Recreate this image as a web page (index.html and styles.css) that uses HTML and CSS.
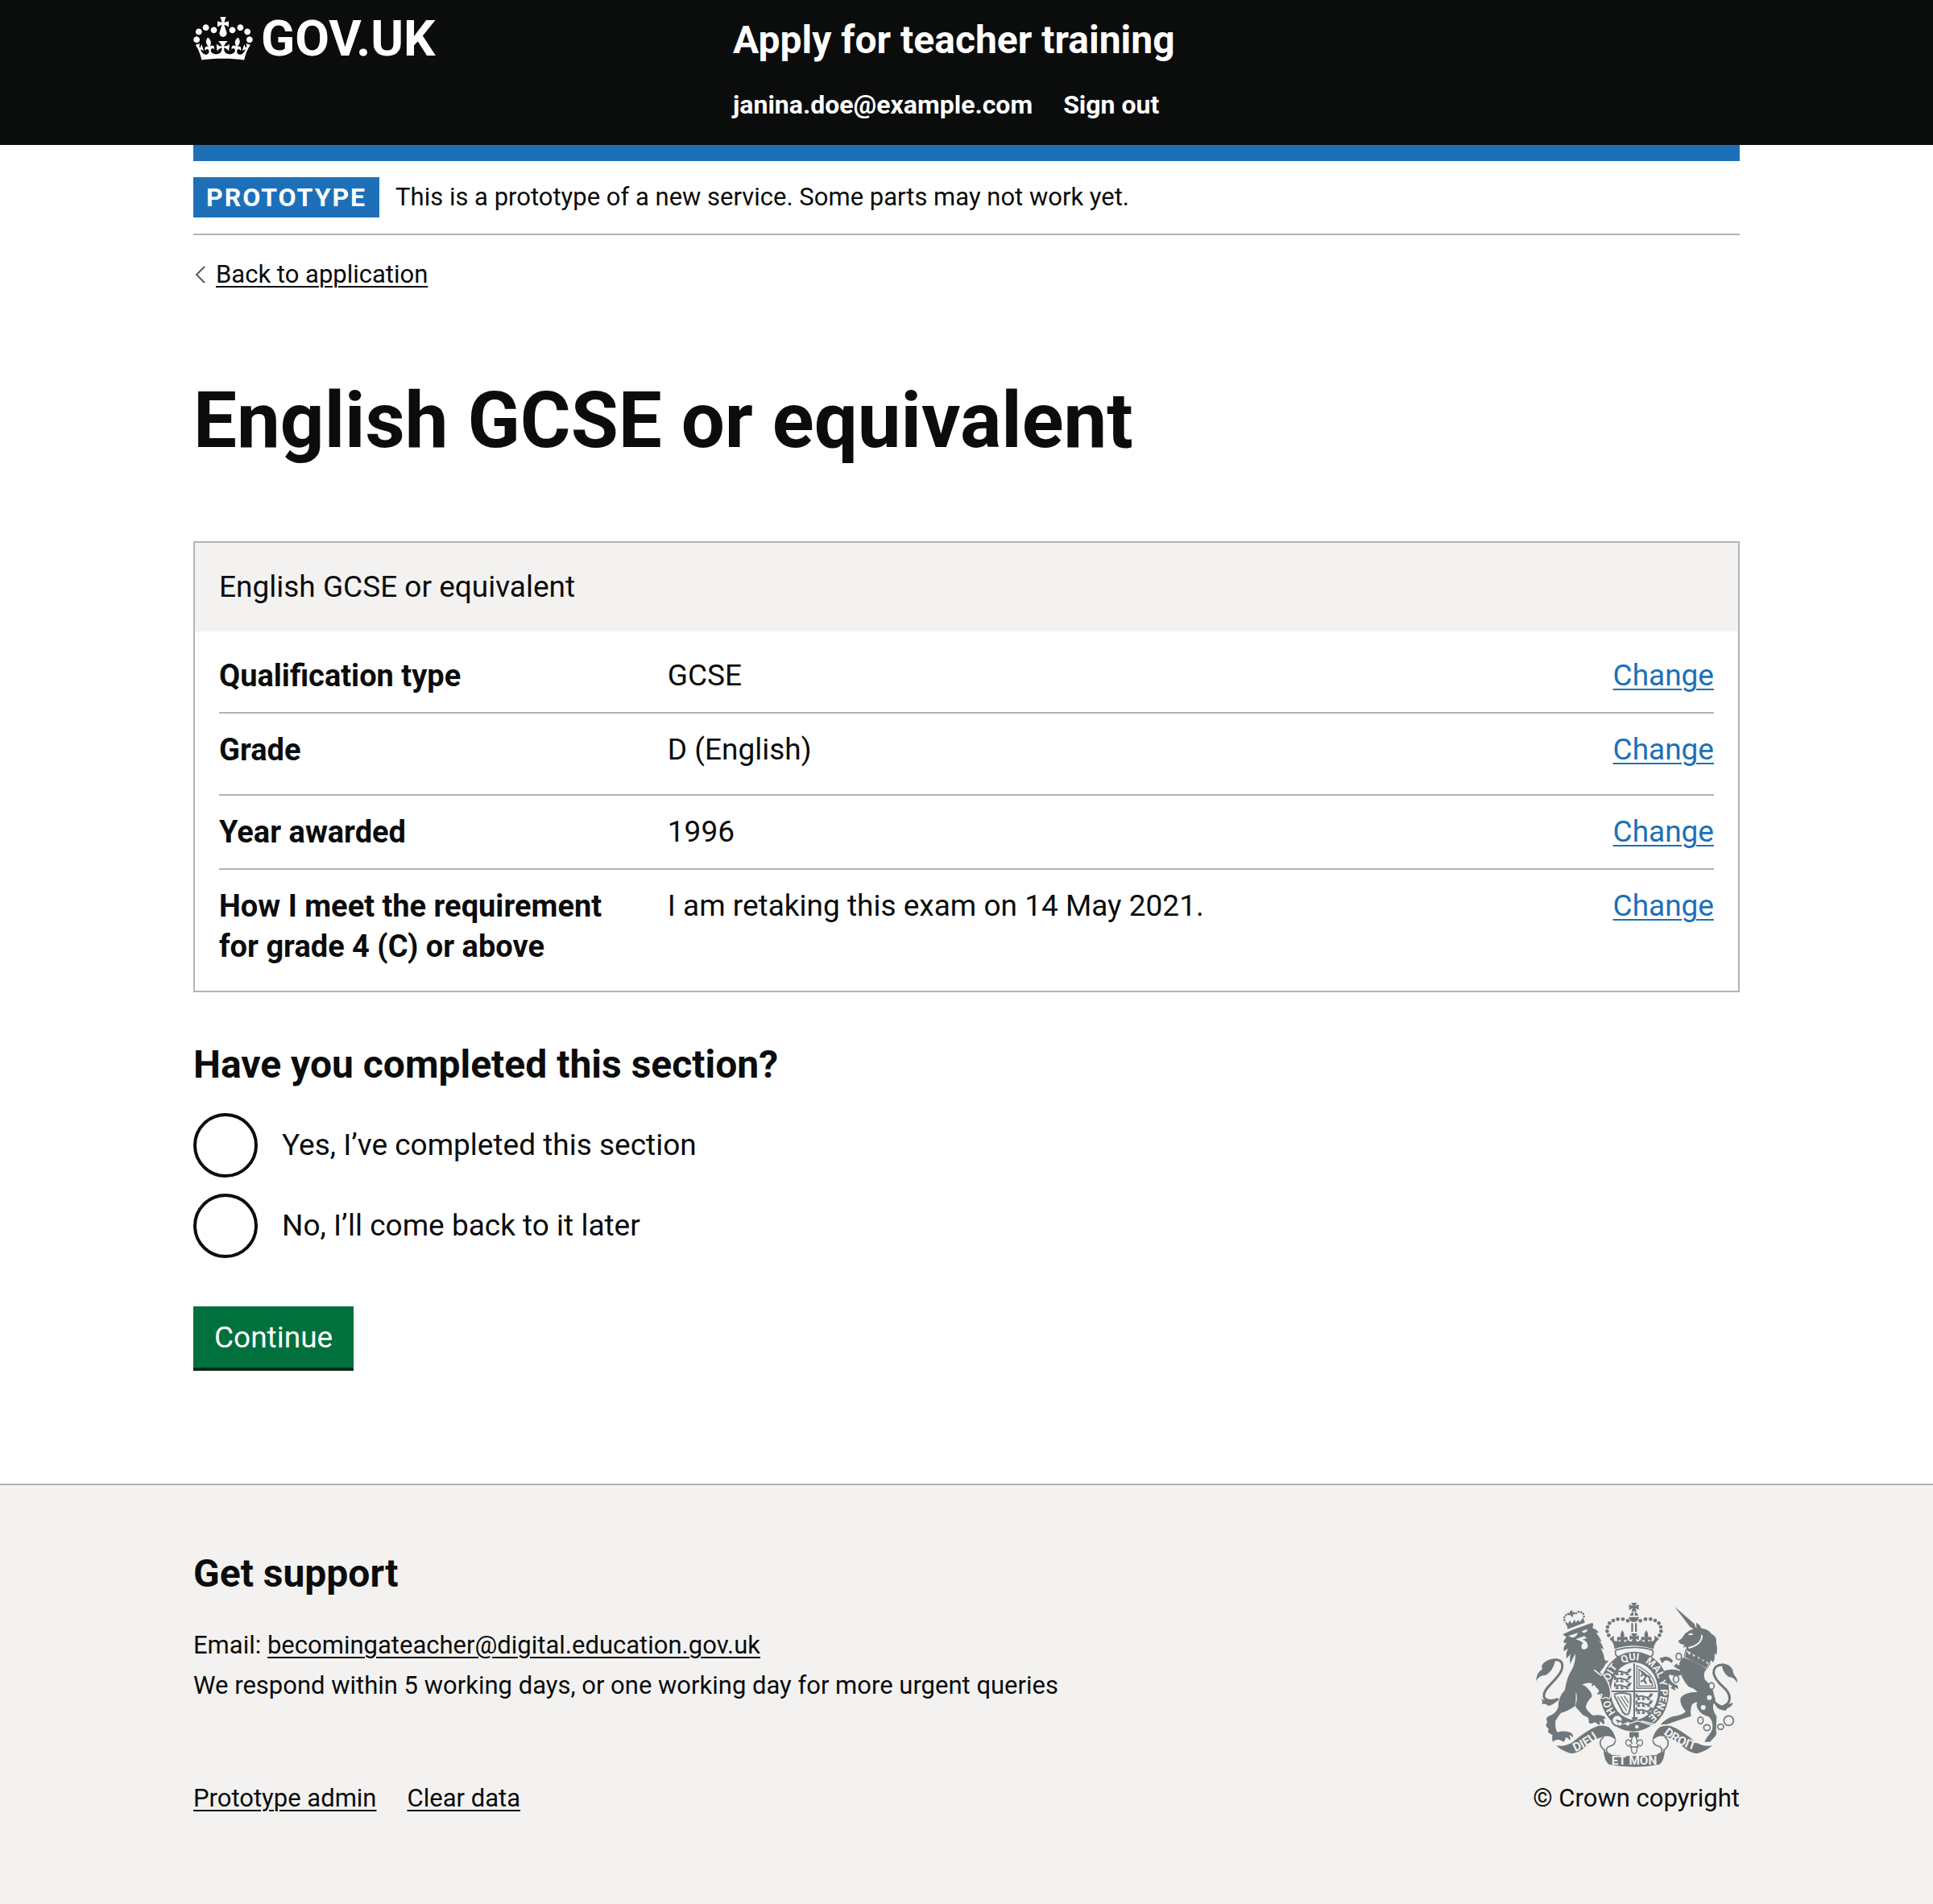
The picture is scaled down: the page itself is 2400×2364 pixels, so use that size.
FILE: index.html
```html
<!DOCTYPE html>
<html lang="en">
<head>
<meta charset="utf-8">
<meta name="viewport" content="width=device-width, initial-scale=1">
<title>English GCSE or equivalent - Apply for teacher training - GOV.UK</title>
<link rel="stylesheet" href="styles.css">
</head>
<body>
<header class="header">
  <div class="container header-inner">
    <div class="header-logo">
      <a class="logo-link" href="#">
        <svg class="crown" viewBox="0 0 132 97" aria-hidden="true"><path fill="currentColor" fill-rule="evenodd" d="M25 30.2c3.5 1.5 7.7-.2 9.1-3.7 1.5-3.6-.2-7.8-3.9-9.2-3.6-1.4-7.6.3-9.1 3.9-1.4 3.5.3 7.5 3.9 9zM9 39.5c3.6 1.5 7.8-.2 9.2-3.7 1.5-3.6-.2-7.8-3.9-9.1-3.6-1.5-7.6.2-9.1 3.8-1.4 3.5.3 7.5 3.8 9zM4.4 57.2c3.5 1.5 7.7-.2 9.1-3.8 1.5-3.6-.2-7.7-3.9-9.1-3.5-1.5-7.6.3-9.1 3.8-1.4 3.5.3 7.6 3.9 9.1zm38.3-21.4c3.5 1.5 7.7-.2 9.1-3.8 1.5-3.6-.2-7.7-3.9-9.1-3.6-1.5-7.6.3-9.1 3.8-1.3 3.6.4 7.7 3.9 9.1zm64.4-5.6c-3.6 1.5-7.8-.2-9.1-3.7-1.5-3.6.2-7.8 3.8-9.2 3.6-1.4 7.7.3 9.2 3.9 1.3 3.5-.4 7.5-3.9 9zm15.9 9.3c-3.6 1.5-7.7-.2-9.1-3.7-1.5-3.6.2-7.8 3.7-9.1 3.6-1.5 7.7.2 9.2 3.8 1.5 3.5-.3 7.5-3.8 9zm4.7 17.7c-3.6 1.5-7.8-.2-9.2-3.8-1.5-3.6.2-7.7 3.9-9.1 3.6-1.5 7.7.3 9.2 3.8 1.3 3.5-.4 7.6-3.9 9.1zM89.3 35.8c-3.6 1.5-7.8-.2-9.2-3.8-1.4-3.6.2-7.7 3.9-9.1 3.6-1.5 7.7.3 9.2 3.8 1.4 3.6-.3 7.7-3.9 9.1zM69.7 17.7l8.9 4.7V9.3l-8.9 2.8c-.2-.3-.5-.6-.9-.9L72.4 0H59.6l3.5 11.2c-.3.3-.6.5-.9.9l-8.8-2.8v13.1l8.8-4.7c.3.3.6.7.9.9l-5 15.4v.1c-.2.8-.4 1.6-.4 2.4 0 4.1 3.1 7.5 7 8.1h.2c.3 0 .7.1 1 .1.4 0 .7 0 1-.1h.2c4-.6 7.1-4.1 7.1-8.1 0-.8-.1-1.7-.4-2.4V34l-5.1-15.4c.4-.2.7-.6 1-.9zM66 92.8c16.9 0 32.8 1.1 47.1 3.2 4-16.9 8.9-26.7 14-33.5l-9.6-3.4c1 4.9 1.1 7.2 0 10.2-1.5-1.4-3-4.3-4.2-8.7L108.6 76c2.8-2 5-3.2 7.5-3.3-4.4 9.4-10 11.9-13.6 11.2-4.3-.8-6.3-4.6-5.6-7.9 1-4.7 5.7-5.9 8-.5 4.3-8.7-3-11.4-7.6-8.8 7.1-7.2 7.9-13.5 2.1-21.1-8 6.1-8.1 12.3-4.5 20.8-4.7-5.4-12.1-2.5-9.5 6.2 3.4-5.2 7.9-2 7.2 3.1-.6 4.3-6.4 7.8-13.5 7.2-10.3-.9-10.9-8-11.2-13.8 2.5-.5 7.1 1.8 11 7.3L80.2 60c-4.1 4.4-8 5.3-12.3 5.4 1.4-4.4 8-11.6 8-11.6H55.5s6.4 7.2 7.9 11.6c-4.2-.1-8-1-12.3-5.4l1.4 16.4c3.9-5.5 8.5-7.7 10.9-7.3-.3 5.8-.9 12.8-11.1 13.8-7.2.6-12.9-2.9-13.5-7.2-.7-5 3.8-8.3 7.1-3.1 2.7-8.7-4.6-11.6-9.4-6.2 3.7-8.5 3.6-14.7-4.6-20.8-5.8 7.6-5 13.9 2.2 21.1-4.7-2.6-11.9.1-7.7 8.8 2.3-5.5 7.1-4.2 8.1.5.7 3.3-1.3 7.1-5.7 7.9-3.5.7-9-1.8-13.5-11.2 2.5.1 4.7 1.3 7.5 3.3l-4.7-15.4c-1.2 4.4-2.7 7.2-4.3 8.7-1.1-3-.9-5.3 0-10.2l-9.5 3.4c5 6.9 9.9 16.7 14 33.5 14.8-2.1 30.8-3.2 47.7-3.2z"/></svg>
        <span>GOV.UK</span>
      </a>
    </div>
    <div class="header-content">
      <a class="service-name" href="#">Apply for teacher training</a>
      <nav class="header-nav" aria-label="Account">
        <a href="#">janina.doe@example.com</a>
        <a href="#">Sign out</a>
      </nav>
    </div>
  </div>
</header>

<div class="container">
  <div class="header-bar"></div>
  <div class="phase-banner">
    <strong class="tag">PROTOTYPE</strong>
    <span>This is a prototype of a new service. Some parts may not work yet.</span>
  </div>
  <a class="back-link" href="#">
    <svg class="chevron" viewBox="0 0 14 22" aria-hidden="true"><path d="M13 1 3 11l10 10" fill="none" stroke="#505a5f" stroke-width="2"/></svg>
    <span>Back to application</span>
  </a>

  <main class="main">
    <h1>English GCSE or equivalent</h1>

    <section class="card">
      <div class="card-header">English GCSE or equivalent</div>
      <dl class="summary">
        <div class="row">
          <dt>Qualification type</dt>
          <dd class="value">GCSE</dd>
          <dd class="action"><a href="#">Change</a></dd>
        </div>
        <div class="row row-tall">
          <dt>Grade</dt>
          <dd class="value">D (English)</dd>
          <dd class="action"><a href="#">Change</a></dd>
        </div>
        <div class="row">
          <dt>Year awarded</dt>
          <dd class="value">1996</dd>
          <dd class="action"><a href="#">Change</a></dd>
        </div>
        <div class="row">
          <dt>How I meet the requirement for grade 4 (C) or above</dt>
          <dd class="value">I am retaking this exam on 14 May 2021.</dd>
          <dd class="action"><a href="#">Change</a></dd>
        </div>
      </dl>
    </section>

    <form class="form" action="#">
      <fieldset class="fieldset">
        <legend>Have you completed this section?</legend>
        <div class="radios">
          <div class="radio">
            <input type="radio" name="completed" id="completed-yes" value="yes">
            <label for="completed-yes">Yes, I’ve completed this section</label>
          </div>
          <div class="radio">
            <input type="radio" name="completed" id="completed-no" value="no">
            <label for="completed-no">No, I’ll come back to it later</label>
          </div>
        </div>
      </fieldset>
      <button class="button" type="submit">Continue</button>
    </form>
  </main>
</div>

<footer class="footer">
  <div class="container footer-inner">
    <div>
      <h2>Get support</h2>
      <p>Email: <a href="#">becomingateacher@digital.education.gov.uk</a></p>
      <p>We respond within 5 working days, or one working day for more urgent queries</p>
      <div class="footer-links">
        <a href="#">Prototype admin</a>
        <a href="#">Clear data</a>
      </div>
    </div>
    <div class="copyright">
      <svg class="crest" viewBox="132 90 750 612" aria-hidden="true">
        <defs>
          <path id="motto" d="M499 532A97 114 0 0 1 499 304A97 114 0 0 1 499 532"/>
          <path id="dieu" d="M278 645Q330 624 384 580"/>
          <path id="droit" d="M606 578Q660 624 750 648"/>
          <g id="fleur"><path d="M0-24Q12-8 4 6Q10-4 18 2Q24 12 14 18Q14 10 8 12L6 22H-6L-8 12Q-14 10-14 18Q-24 12-18 2Q-10-4-4 6Q-12-8 0-24Z"/></g>
          <g id="lions" fill="none" stroke="#6f777b" stroke-width="6">
            <path d="M2 18V6l8 8q10-6 22 0t24-2l6-10M12 14l-4 9h8M28 14l-2 9h8M42 14l4 9h8M50 11l8-8"/>
            <path d="M2 44V32l8 8q10-6 22 0t24-2l6-10M12 40l-4 9h8M28 40l-2 9h8M42 40l4 9h8M50 37l8-8"/>
            <path d="M2 70V58l8 8q10-6 22 0t24-2l6-10M12 66l-4 9h8M28 66l-2 9h8M42 66l4 9h8M50 63l8-8"/>
          </g>
          <g id="hind-ribbon">
            <path fill="#6f777b" d="M207 622Q240 628 270 608Q325 562 362 549Q382 545 402 553Q424 568 431 604Q410 580 383 589Q340 600 310 632Q285 651 262 651Q232 644 207 622Z"/>
            <path fill="none" stroke="#6f777b" stroke-width="5" d="M385 590Q366 602 373 622Q378 634 390 640M428 602Q428 618 408 624Q390 630 396 646Q402 654 412 656"/>
          </g>
        </defs>
        <g fill="#6f777b">
          <!-- central crown -->
          <path d="M487 90h21l-6 12 13-6v20l-13-6 6 12h-21l6-12-14 6V96l14 6z"/>
          <path d="M495 124v14h-13q2-10 13-14zM500 124v14h13q-2-10-13-14zM478 143h38q-1 12-12 18h-14q-11-6-12-18z"/>
          <path d="M487 166h7v32h-7zM501 166h7v32h-7z"/>
          <path d="M486 204h24l-7 12 12-5v18l-12-5 7 14h-24l7-14-12 5v-18l12 5z"/>
          <circle cx="474" cy="157" r="7"/><circle cx="456" cy="151" r="7"/><circle cx="437" cy="151" r="7"/><circle cx="420" cy="156" r="7"/><circle cx="406" cy="166" r="7"/><circle cx="399" cy="180" r="7"/><circle cx="397" cy="196" r="7"/><circle cx="403" cy="211" r="7"/>
          <circle cx="521" cy="157" r="7"/><circle cx="540" cy="151" r="7"/><circle cx="559" cy="151" r="7"/><circle cx="576" cy="156" r="7"/><circle cx="590" cy="166" r="7"/><circle cx="597" cy="180" r="7"/><circle cx="598" cy="196" r="7"/><circle cx="592" cy="211" r="7"/>
          <use href="#fleur" x="454" y="216"/><use href="#fleur" x="543" y="216"/>
          <path d="M406 224L423 212Q418 238 436 232L454 236Q470 238 474 228L482 234H514L522 228Q528 238 544 236L560 232Q577 238 573 212L591 224Q572 240 570 262Q498 238 424 262Q424 240 406 224Z"/>
          <path d="M430 266Q498 246 566 266Q572 280 562 290H434Q424 280 430 266Z" fill="#f3f2f1" stroke="#6f777b" stroke-width="5"/>
          <!-- garter -->
          <path fill-rule="evenodd" d="M499 272A129 148 0 0 1 499 568A129 148 0 0 1 499 272ZM499 312A88 107 0 0 0 499 526A88 107 0 0 0 499 312Z"/>
          <path d="M495 316h6v208h-6zM413 417h172v6H413z"/>
          <use href="#lions" x="424" y="334"/>
          <use href="#lions" x="504" y="426"/>
          <g fill="none" stroke="#6f777b" stroke-width="4">
            <path d="M508 324V408H578Q574 354 508 324ZM516 338V400H568Q560 364 516 338Z"/>
            <path stroke-width="7" d="M522 384l12-6 8-16-10-6-8-12M534 378l10 14M542 362q14 0 14 12t10 14M532 356l-10 8"/>
            <path stroke-width="6" d="M422 432Q450 420 484 432Q488 470 478 502Q468 512 456 498L424 436"/>
            <path d="M436 440l34 52M448 438l26 40M460 437l18 26"/>
          </g>
          <path d="M487 516h26l-6 10h-14z"/>
          <!-- buckle and strap end -->
          <path d="M420 536Q470 548 510 530L566 547Q500 590 436 556Z" stroke="#f3f2f1" stroke-width="4"/>
          <path d="M524 530L590 546" fill="none" stroke="#f3f2f1" stroke-width="4"/>
          <circle cx="435" cy="528" r="20" fill="#f3f2f1" stroke="#6f777b" stroke-width="6"/>
          <path d="M428 524l40 10-24 14z"/>
          <g fill="#f3f2f1"><circle cx="445" cy="541" r="7"/><circle cx="474" cy="541" r="7"/><circle cx="508" cy="552" r="7"/></g>
          <g fill="#f3f2f1" class="crest-motto">
            <text><textPath href="#motto" startOffset="12%">HO</textPath></text>
            <text><textPath href="#motto" startOffset="27%">SOIT</textPath></text>
            <text><textPath href="#motto" startOffset="43%">QUI</textPath></text>
            <text><textPath href="#motto" startOffset="56%">MAL</textPath></text>
            <text><textPath href="#motto" startOffset="69%">Y</textPath></text>
            <text><textPath href="#motto" startOffset="74%">PENSE</textPath></text>
          </g>
          <!-- lion -->
          <path stroke="#f3f2f1" stroke-width="4" d="M388 303L408 304Q392 318 386 332L372 350Q402 376 408 410Q414 446 402 448Q398 442 392 442Q378 450 370 442Q382 436 376 430Q362 438 356 426Q370 422 362 412Q350 404 352 398L338 404Q334 392 348 388L340 330Z"/>
          <path d="M232 208L265 192L340 165L346 168L343 184Q360 190 366 202L356 201Q372 222 377 236L367 230Q382 248 384 264L373 258Q386 282 388 303L396 308Q386 318 380 330L370 348Q396 376 404 410L380 430L350 396Q330 382 304 395Q320 400 330 415Q342 428 340 440Q318 462 318 480Q325 496 345 510Q368 504 388 514Q396 526 382 522Q392 534 384 544Q374 532 368 532Q374 540 366 546Q352 532 346 536Q340 544 328 536Q332 524 324 516Q304 508 300 500Q290 490 280 478Q278 470 284 455Q286 430 280 424Q282 450 278 475Q250 495 225 500Q210 520 205 530Q202 560 212 572Q240 564 262 574Q274 582 268 592Q262 582 256 584Q264 596 258 602Q250 590 242 592Q242 604 234 608Q222 598 216 600Q200 600 195 610Q190 590 194 582Q170 574 180 560Q162 548 175 535Q166 520 178 513Q205 505 215 480Q215 440 240 415Q245 370 268 335Q280 310 279 280Q268 298 260 318Q256 295 262 280L246 298Q242 276 252 260L236 270Q232 256 246 240L234 238Q234 230 246 218Z"/>
          <path fill="#f3f2f1" d="M252 214L288 202Q286 216 268 220ZM302 196L324 188Q324 200 308 202ZM280 226L312 214L322 222L306 226Q328 236 325 256Q314 270 303 260Q298 246 308 240L296 232Z"/>
          <path fill="none" stroke="#f3f2f1" stroke-width="5" d="M349 340L376 362"/>
          <path d="M248 176L312 156L314 164L250 188ZM246 176L240 158L252 168L258 156L266 168L276 152L280 164L290 154L296 162L308 144L312 158Z"/>
          <path d="M257 122l12-4-2 8 8-2 2 10-8-2 2 10h-8l-2-8-7 4-2-10 7 2z"/>
          <g><circle cx="238" cy="154" r="4"/><circle cx="238" cy="144" r="4"/><circle cx="244" cy="136" r="4"/><circle cx="252" cy="131" r="4"/><circle cx="281" cy="129" r="4"/><circle cx="290" cy="124" r="4"/><circle cx="300" cy="125" r="4"/><circle cx="308" cy="131" r="4"/><circle cx="311" cy="141" r="4"/></g>
          <path fill="none" stroke="#6f777b" stroke-width="9" d="M204 302Q238 302 228 340Q218 362 186 394Q154 426 164 446Q180 462 216 448"/>
          <path d="M210 298Q176 298 160 315Q148 328 157 337Q136 346 132 382Q146 358 168 360Q196 344 204 306ZM147 444Q158 458 178 450L216 452Q196 470 178 474Q168 464 154 468Q160 456 147 444Z"/>
          <!-- unicorn -->
          <path d="M648 104L722 168L732 194L706 180Z"/>
          <path d="M662 232Q676 226 685 208Q700 192 730 184L729 164Q744 172 748 185Q776 188 786 206Q808 216 803 238Q810 262 804 284L797 278Q800 300 792 312L784 304L774 326L694 266L690 252L680 258L684 246L668 242Z"/>
          <path fill="none" stroke="#f3f2f1" stroke-width="6" d="M750 210Q752 246 700 258"/>
          <path fill="#f3f2f1" d="M698 208q10-8 20-2-8 8-20 2z"/>
          <path fill="#f3f2f1" stroke="#6f777b" stroke-width="3" d="M690 264L782 316L770 334L684 290Z"/>
          <path d="M688 290L692 268L704 284L712 274L720 292L730 280L738 300L748 290L754 308L764 300L768 318L778 312L768 332Z"/>
          <path d="M680 293Q730 310 768 337Q752 352 762 377Q792 400 797 440Q806 452 792 470Q790 495 805 512L803 565Q808 582 796 592L780 608L760 608Q768 590 778 580Q790 566 790 548Q788 524 775 514Q748 508 738 490Q726 474 733 460Q718 462 712 472Q706 496 710 512Q660 528 622 542L596 544Q615 522 640 514Q680 508 690 495Q668 470 670 446Q684 422 734 422Q720 408 700 402Q672 370 668 340Q650 334 634 312Q625 302 612 305L602 316L592 296L616 290Q636 292 646 312L666 324Q664 308 680 293Z"/>
          <path d="M672 345Q640 333 612 343Q600 352 612 372Q622 392 640 400L634 408L652 417L648 404L662 412L660 398Q640 392 632 376Q624 362 630 358Q650 364 672 360Z"/>
          <path fill="none" stroke="#6f777b" stroke-width="9" d="M834 321Q794 318 794 352Q798 376 830 404Q862 432 850 460Q842 472 820 480"/>
          <path d="M824 317Q856 316 866 342Q864 352 880 372L883 390Q870 366 850 366Q826 350 824 317ZM790 446Q810 470 830 474L866 462Q862 478 846 482L838 492Q822 490 810 484Q794 466 790 446Z"/>
          <g fill="#f3f2f1"><circle cx="645" cy="316" r="8"/><circle cx="778" cy="443" r="9"/><circle cx="755" cy="480" r="9"/></g>
          <g fill="#f3f2f1" stroke="#6f777b" stroke-width="5"><ellipse cx="664" cy="290" rx="10" ry="12"/><ellipse cx="654" cy="374" rx="10" ry="13"/><ellipse cx="786" cy="400" rx="10" ry="12"/><ellipse cx="745" cy="528" rx="10" ry="13"/><ellipse cx="769" cy="555" rx="12" ry="11"/><ellipse cx="820" cy="552" rx="11" ry="10"/><circle cx="850" cy="529" r="18"/></g>
          <!-- ribbons and motto -->
          <use href="#hind-ribbon"/>
          <use href="#hind-ribbon" transform="matrix(-1 0 0 1 996 0)"/>
          <path d="M383 634Q392 652 412 656Q498 666 584 656Q604 652 613 634Q610 682 592 692Q498 711 404 692Q386 682 383 634Z"/>
          <path d="M480 572h35v20h-35z"/>
          <path fill="#f3f2f1" stroke="#6f777b" stroke-width="4" d="M498 582Q514 598 506 616Q512 596 526 602Q534 614 522 624L512 618L508 630Q510 650 498 652Q486 650 488 630L484 618L474 624Q462 614 470 602Q484 596 490 616Q482 598 498 582ZM480 627h36"/>
          <g fill="#f3f2f1" class="crest-ribbon">
            <text><textPath href="#dieu">DIEU</textPath></text>
            <text><textPath href="#droit">DROIT</textPath></text>
            <text x="498" y="693" text-anchor="middle">ET MON</text>
          </g>
        </g>
      </svg>
      <span>© Crown copyright</span>
    </div>
  </div>
</footer>
</body>
</html>
```
FILE: styles.css
```css
* {
  box-sizing: border-box;
}

body {
  margin: 0;
  background: #ffffff;
  color: #0b0c0c;
  font-family: Roboto, "Liberation Sans", sans-serif;
  font-size: 37px;
  line-height: 50px;
}

a {
  color: #1d70b8;
  text-decoration-thickness: 2px;
  text-underline-offset: 4px;
}

h1,
h2,
p,
dl,
dd {
  margin: 0;
}

.container {
  max-width: 2040px;
  margin: 0 auto;
  padding: 0 60px;
}

.header {
  background: #0b0c0c;
  color: #ffffff;
}

.header a {
  color: inherit;
  text-decoration: none;
}

.header-inner {
  display: grid;
  grid-template-columns: 1fr 2fr;
  padding-top: 20px;
  padding-bottom: 30px;
}

.logo-link {
  display: inline-flex;
  align-items: center;
  gap: 10px;
  font-size: 62px;
  font-weight: 700;
  line-height: 56px;
}

.crown {
  width: 74px;
  height: 54px;
}

.header-content {
  display: flex;
  flex-direction: column;
  align-items: flex-start;
  gap: 30px;
  padding-left: 30px;
  font-weight: 700;
}

.service-name {
  font-size: 48px;
  line-height: 60px;
}

.header-nav {
  display: flex;
  flex-wrap: wrap;
  gap: 38px;
  font-size: 32px;
  line-height: 40px;
}

.header-bar {
  height: 20px;
  background: #1d70b8;
}

.phase-banner {
  display: flex;
  align-items: center;
  gap: 20px;
  padding: 20px 0;
  border-bottom: 2px solid #b1b4b6;
  font-size: 31px;
}

.tag {
  padding: 0 16px;
  background: #1d70b8;
  color: #ffffff;
  font-size: 32px;
  letter-spacing: 2px;
}

.back-link {
  display: inline-flex;
  align-items: center;
  gap: 12px;
  margin-top: 24px;
  color: #0b0c0c;
  font-size: 31px;
  text-decoration: none;
}

.back-link span {
  text-decoration: underline;
  text-decoration-thickness: 2px;
  text-underline-offset: 4px;
}

.chevron {
  width: 16px;
  height: 22px;
}

.main {
  padding-top: 106px;
  padding-bottom: 144px;
}

h1 {
  margin-bottom: 100px;
  font-size: 96px;
  font-weight: 700;
  line-height: 100px;
}

.card {
  border: 2px solid #b1b4b6;
}

.card-header {
  padding: 30px;
  background: #f3f2f1;
}

.summary {
  padding: 10px 30px;
}

.row {
  display: flex;
  padding: 20px 0;
  border-bottom: 2px solid #b1b4b6;
}

.row-tall {
  padding-bottom: 30px;
}

.row:last-child {
  border-bottom: 0;
}

.row dt {
  width: 30%;
  padding-right: 40px;
  font-size: 38px;
  font-weight: 700;
}

.value {
  width: 50%;
}

.action {
  width: 20%;
  text-align: right;
}

.form {
  margin-top: 60px;
}

.fieldset {
  margin: 0 0 60px;
  padding: 0;
  border: 0;
}

.fieldset legend {
  margin-bottom: 30px;
  padding: 0;
  font-size: 48px;
  font-weight: 700;
  line-height: 60px;
}

.radios {
  display: flex;
  flex-direction: column;
  gap: 20px;
}

.radio {
  display: flex;
  align-items: center;
  gap: 30px;
}

.radio input {
  appearance: none;
  width: 80px;
  height: 80px;
  margin: 0;
  border: 4px solid #0b0c0c;
  border-radius: 50%;
  background: #ffffff;
}

.radio input:checked {
  background: radial-gradient(#0b0c0c 20px, #ffffff 21px);
}

.button {
  display: block;
  padding: 14px 26px 12px;
  border: 0;
  background: #00703c;
  box-shadow: 0 4px 0 #002d18;
  color: #ffffff;
  font: inherit;
}

.footer {
  border-top: 2px solid #b1b4b6;
  background: #f3f2f1;
  font-size: 31px;
}

.footer a {
  color: inherit;
}

.footer-inner {
  display: flex;
  flex-wrap: wrap;
  align-items: flex-end;
  justify-content: space-between;
  padding-top: 80px;
  padding-bottom: 106px;
}

.footer h2 {
  margin-bottom: 34px;
  font-size: 48px;
  font-weight: 700;
  line-height: 60px;
}

.footer-links {
  display: flex;
  gap: 38px;
  margin-top: 90px;
}

.copyright {
  display: flex;
  flex-direction: column;
  align-items: center;
  gap: 14px;
}

.crest {
  width: 250px;
  height: 204px;
}

.crest text {
  font-weight: 700;
}

.crest-motto {
  font-size: 38px;
}

.crest-ribbon {
  font-size: 46px;
}
```
